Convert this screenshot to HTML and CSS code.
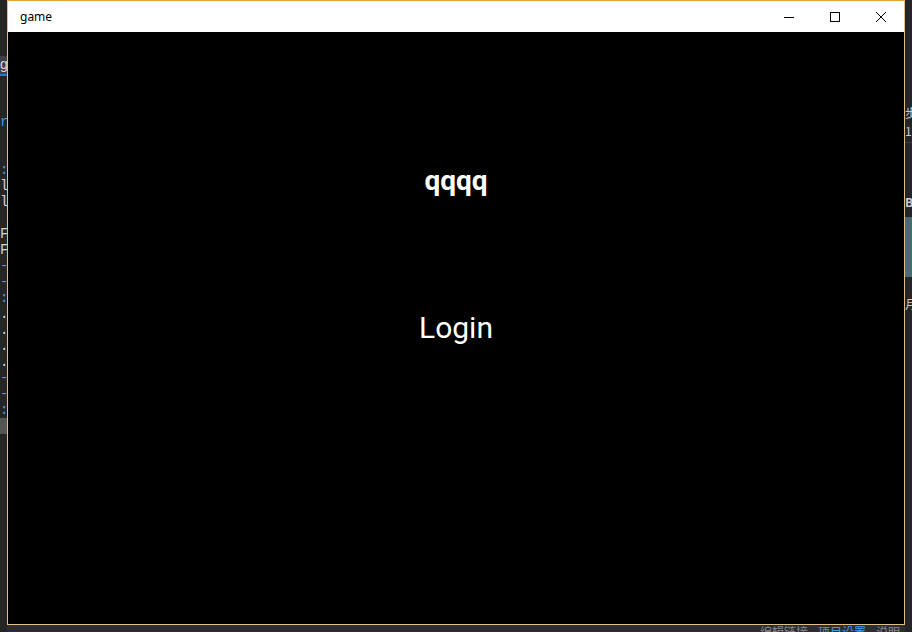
FILE: index.html
```html
<!DOCTYPE html>
<html>
<head>
<meta charset="utf-8">
<link rel="stylesheet" href="styles.css">
</head>
<body>
<div class="desktop">
  <div class="ide-left">
    <div class="tab">g</div>
    <div class="code">
      <span class="blue">r</span>
      <span class="blank"></span>
      <span class="blank"></span>
      <span class="blue">:</span>
      <span>ll</span>
      <span>ll</span>
      <span class="blank"></span>
      <span>F</span>
      <span>F</span>
      <span class="blue">--</span>
      <span class="blank"></span>
      <span class="blue">:</span>
      <span>.c</span>
      <span>.c</span>
      <span>.c</span>
      <span>.c</span>
      <span class="blue">--</span>
      <span class="blank"></span>
      <span class="blue">:</span>
      <span class="hl"></span>
    </div>
  </div>
  <div class="ide-right">
    <div class="r1">步</div>
    <div class="r2">1</div>
    <div class="r3">B</div>
    <div class="rpanel"></div>
    <div class="r4">月</div>
  </div>
  <div class="ide-bottom">
    <span class="st">编辑链接</span>
    <span class="st link">项目设置</span>
    <span class="st">说明</span>
  </div>
  <div class="window">
    <div class="titlebar">
      <span class="title">game</span>
      <div class="controls">
        <div class="btn">
          <svg width="10" height="10" viewBox="0 0 10 10"><path d="M0 5.5h10" stroke="#000" stroke-width="1"/></svg>
        </div>
        <div class="btn">
          <svg width="10" height="10" viewBox="0 0 10 10"><rect x="0.5" y="0.5" width="9" height="9" fill="none" stroke="#000" stroke-width="1"/></svg>
        </div>
        <div class="btn">
          <svg width="10" height="10" viewBox="0 0 10 10"><path d="M0 0L10 10M10 0L0 10" stroke="#000" stroke-width="1"/></svg>
        </div>
      </div>
    </div>
    <div class="content">
      <div class="name">qqqq</div>
      <div class="login">Login</div>
    </div>
  </div>
</div>
</body>
</html>
```

FILE: styles.css
```css
html, body {
  margin: 0;
  padding: 0;
  width: 912px;
  height: 632px;
  overflow: hidden;
  background: #2d2d30;
}
.desktop {
  position: relative;
  width: 912px;
  height: 632px;
  font-family: "Liberation Mono", monospace;
  color: #c8c8c8;
}
.ide-left {
  position: absolute;
  left: 0;
  top: 0;
  width: 7px;
  height: 632px;
  overflow: hidden;
  background: #252526;
}
.ide-left .tab {
  margin-top: 56px;
  height: 18px;
  font: 14px "Liberation Sans", sans-serif;
  color: #ddd;
  border-bottom: 2px solid #1e7bd1;
  background: #3f3f46;
}
.ide-left .code {
  display: flex;
  flex-direction: column;
  font-size: 14px;
  line-height: 16px;
  padding-top: 38px;
}
.ide-left .code span { height: 16px; color: #d4d4d4; }
.ide-left .code .blue { color: #3d9be9; }
.ide-left .code .hl { background: #555; }
.ide-right {
  position: absolute;
  left: 905px;
  top: 0;
  width: 7px;
  height: 632px;
  overflow: hidden;
  background: #252526;
  font: 12px "Noto Sans CJK SC", sans-serif;
  color: #ccc;
}
.ide-right .r1 { margin-top: 104px; height: 18px; }
.ide-right .r2 { height: 20px; border-bottom: 1px solid #3f3f46; }
.ide-right .r3 { margin-top: 50px; height: 16px; font-weight: bold; }
.ide-right .rpanel { margin-top: 8px; height: 60px; background: #4d6877; }
.ide-right .r4 { margin-top: 18px; height: 20px; }
.ide-bottom {
  position: absolute;
  left: 760px;
  top: 625px;
  display: flex;
  gap: 10px;
  font: 12px "Noto Sans CJK SC", sans-serif;
  color: #888;
  line-height: 14px;
}
.ide-bottom .link { color: #3d9be9; }
.window {
  position: absolute;
  left: 7px;
  top: 0;
  width: 896px;
  height: 623px;
  border: 1px solid #e0bf8d;
  border-top-color: #e8a33c;
  display: flex;
  flex-direction: column;
  background: #000;
}
.titlebar {
  height: 31px;
  background: #fff;
  display: flex;
  align-items: center;
  justify-content: space-between;
  flex-shrink: 0;
}
.title {
  padding-left: 12px;
  font: 12px "Noto Sans", "Liberation Sans", sans-serif;
  color: #000;
  margin-top: -1px;
}
.controls {
  display: flex;
  height: 31px;
}
.btn {
  width: 46px;
  height: 31px;
  display: flex;
  align-items: center;
  justify-content: center;
}
.content {
  flex: 1;
  background: #000;
  display: flex;
  flex-direction: column;
  align-items: center;
  color: #fff;
  font-family: Roboto, "Noto Sans", sans-serif;
  padding-top: 132px;
}
.name {
  font-size: 28px;
  font-weight: bold;
  line-height: 34px;
}
.login {
  margin-top: 112px;
  font-size: 30px;
  line-height: 36px;
}
```
